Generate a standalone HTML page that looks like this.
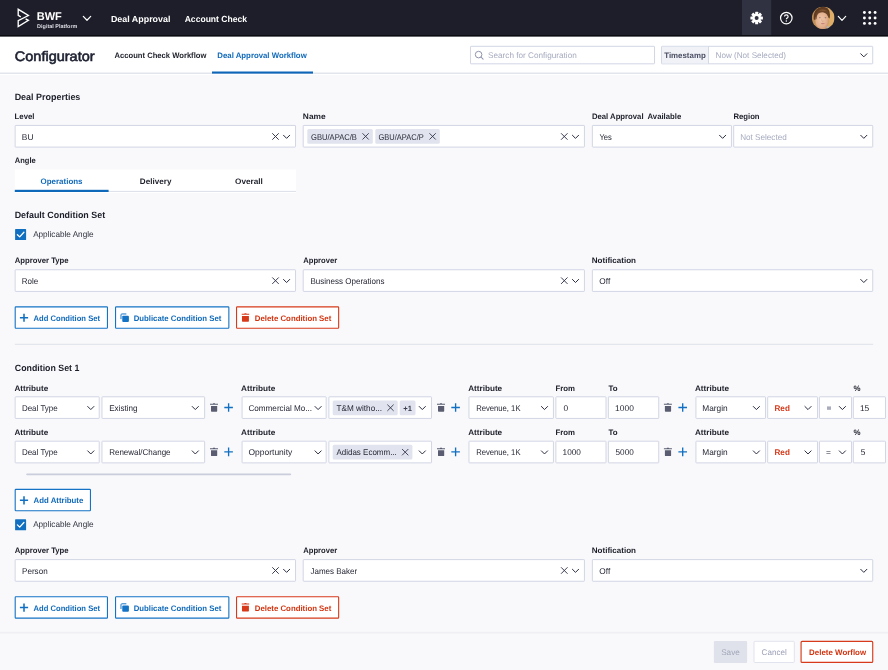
<!DOCTYPE html>
<html lang="en"><head><meta charset="utf-8"><title>Configurator</title>
<style>
*{margin:0;padding:0;box-sizing:border-box}
html,body{width:888px;height:670px;overflow:hidden;background:#f9f9fb;font-family:"Liberation Sans", sans-serif;}
#app{position:relative;width:888px;height:670px;overflow:hidden;background:#f9f9fb;filter:opacity(1)}
.layer{position:absolute;left:0;top:0;width:888px;height:670px}
.t{position:absolute;white-space:nowrap;line-height:1;display:block;transform-origin:0 0}
</style></head>
<body><div id="app">
<svg class="layer" id="shape-layer" width="888" height="670" viewBox="0 0 888 670"><rect x="0.00" y="36.00" width="888.00" height="39.10" rx="0" fill="#fff"/><rect x="0.00" y="72.60" width="888.00" height="1.20" rx="0" fill="#dcdfe9"/><rect x="0.00" y="0.00" width="888.00" height="36.40" rx="0" fill="#1d1e29"/><rect x="0.00" y="35.00" width="888.00" height="1.40" rx="0" fill="#0b0b12"/><rect x="742.00" y="0.00" width="29.20" height="35.00" rx="0" fill="#303241"/><rect x="212.00" y="71.50" width="101.00" height="2.10" rx="0" fill="#0e66b8"/><rect x="470.48" y="46.32" width="184.05" height="17.50" rx="0.5" fill="#fff" stroke="#d0d4e4" stroke-width="0.95"/><rect x="661.48" y="46.32" width="211.25" height="17.50" rx="0.5" fill="#fff" stroke="#d0d4e4" stroke-width="0.95"/><rect x="661.90" y="46.80" width="46.30" height="16.60" rx="0" fill="#f1f2f7"/><rect x="708.00" y="46.40" width="0.95" height="17.40" rx="0" fill="#d3d6e5"/><rect x="15.17" y="125.45" width="280.35" height="21.65" rx="0.5" fill="#fff" stroke="#d0d4e4" stroke-width="0.95"/><rect x="303.23" y="125.45" width="281.20" height="21.65" rx="0.5" fill="#fff" stroke="#d0d4e4" stroke-width="0.95"/><rect x="307.30" y="129.05" width="65.50" height="14.80" rx="1.5" fill="#e1e4ee"/><rect x="375.30" y="129.05" width="64.50" height="14.80" rx="1.5" fill="#e1e4ee"/><rect x="592.38" y="125.45" width="139.05" height="21.65" rx="0.5" fill="#fff" stroke="#d0d4e4" stroke-width="0.95"/><rect x="733.68" y="125.45" width="139.05" height="21.65" rx="0.5" fill="#fff" stroke="#d0d4e4" stroke-width="0.95"/><rect x="14.80" y="169.50" width="281.20" height="23.50" rx="0" fill="#fff"/><rect x="14.80" y="190.90" width="281.20" height="0.90" rx="0" fill="#d8dbe6"/><rect x="14.80" y="189.80" width="93.80" height="2.20" rx="0" fill="#0f69bb"/><rect x="15.17" y="269.76" width="280.35" height="21.65" rx="0.5" fill="#fff" stroke="#d0d4e4" stroke-width="0.95"/><rect x="303.23" y="269.76" width="281.20" height="21.65" rx="0.5" fill="#fff" stroke="#d0d4e4" stroke-width="0.95"/><rect x="592.38" y="269.76" width="280.35" height="21.65" rx="0.5" fill="#fff" stroke="#d0d4e4" stroke-width="0.95"/><rect x="15.20" y="306.88" width="92.25" height="21.40" rx="0.7" fill="#fff" stroke="#1573c6" stroke-width="1.1"/><rect x="115.55" y="306.88" width="113.30" height="21.40" rx="0.7" fill="#fff" stroke="#1573c6" stroke-width="1.1"/><rect x="236.55" y="306.88" width="102.10" height="21.40" rx="0.7" fill="#fff" stroke="#d63a1a" stroke-width="1.1"/><rect x="14.80" y="343.80" width="858.40" height="1.00" rx="0" fill="#dfe1ea"/><rect x="15.17" y="396.80" width="84.05" height="21.65" rx="0.5" fill="#fff" stroke="#d0d4e4" stroke-width="0.95"/><rect x="101.97" y="396.80" width="102.65" height="21.65" rx="0.5" fill="#fff" stroke="#d0d4e4" stroke-width="0.95"/><rect x="242.07" y="396.80" width="84.10" height="21.65" rx="0.5" fill="#fff" stroke="#d0d4e4" stroke-width="0.95"/><rect x="328.88" y="396.80" width="102.65" height="21.65" rx="0.5" fill="#fff" stroke="#d0d4e4" stroke-width="0.95"/><rect x="332.70" y="400.42" width="65.00" height="14.80" rx="1.5" fill="#e1e4ee"/><rect x="399.70" y="400.42" width="15.80" height="14.80" rx="1.5" fill="#e1e4ee"/><rect x="468.98" y="396.80" width="84.45" height="21.65" rx="0.5" fill="#fff" stroke="#d0d4e4" stroke-width="0.95"/><rect x="555.88" y="396.80" width="50.15" height="21.65" rx="0.5" fill="#fff" stroke="#d0d4e4" stroke-width="0.95"/><rect x="608.38" y="396.80" width="50.35" height="21.65" rx="0.5" fill="#fff" stroke="#d0d4e4" stroke-width="0.95"/><rect x="695.93" y="396.80" width="69.60" height="21.65" rx="0.5" fill="#fff" stroke="#d0d4e4" stroke-width="0.95"/><rect x="767.68" y="396.80" width="49.85" height="21.65" rx="0.5" fill="#fff" stroke="#d0d4e4" stroke-width="0.95"/><rect x="819.43" y="396.80" width="32.10" height="21.65" rx="0.5" fill="#fff" stroke="#d0d4e4" stroke-width="0.95"/><rect x="827.00" y="406.42" width="4.00" height="3.40" rx="0" fill="#a9acbc"/><rect x="853.33" y="396.80" width="32.20" height="21.65" rx="0.5" fill="#fff" stroke="#d0d4e4" stroke-width="0.95"/><rect x="15.17" y="441.20" width="84.05" height="21.65" rx="0.5" fill="#fff" stroke="#d0d4e4" stroke-width="0.95"/><rect x="101.97" y="441.20" width="102.65" height="21.65" rx="0.5" fill="#fff" stroke="#d0d4e4" stroke-width="0.95"/><rect x="242.07" y="441.20" width="84.10" height="21.65" rx="0.5" fill="#fff" stroke="#d0d4e4" stroke-width="0.95"/><rect x="328.88" y="441.20" width="102.65" height="21.65" rx="0.5" fill="#fff" stroke="#d0d4e4" stroke-width="0.95"/><rect x="332.70" y="444.82" width="79.70" height="14.80" rx="1.5" fill="#e1e4ee"/><rect x="468.98" y="441.20" width="84.45" height="21.65" rx="0.5" fill="#fff" stroke="#d0d4e4" stroke-width="0.95"/><rect x="555.88" y="441.20" width="50.15" height="21.65" rx="0.5" fill="#fff" stroke="#d0d4e4" stroke-width="0.95"/><rect x="608.38" y="441.20" width="50.35" height="21.65" rx="0.5" fill="#fff" stroke="#d0d4e4" stroke-width="0.95"/><rect x="695.93" y="441.20" width="69.60" height="21.65" rx="0.5" fill="#fff" stroke="#d0d4e4" stroke-width="0.95"/><rect x="767.68" y="441.20" width="49.85" height="21.65" rx="0.5" fill="#fff" stroke="#d0d4e4" stroke-width="0.95"/><rect x="819.43" y="441.20" width="32.10" height="21.65" rx="0.5" fill="#fff" stroke="#d0d4e4" stroke-width="0.95"/><rect x="853.33" y="441.20" width="32.20" height="21.65" rx="0.5" fill="#fff" stroke="#d0d4e4" stroke-width="0.95"/><rect x="26.20" y="473.40" width="265.00" height="1.90" rx="1" fill="#c9cddc"/><rect x="15.20" y="489.42" width="75.25" height="21.40" rx="0.7" fill="#fff" stroke="#1573c6" stroke-width="1.1"/><rect x="15.17" y="559.60" width="280.35" height="21.65" rx="0.5" fill="#fff" stroke="#d0d4e4" stroke-width="0.95"/><rect x="303.23" y="559.60" width="281.20" height="21.65" rx="0.5" fill="#fff" stroke="#d0d4e4" stroke-width="0.95"/><rect x="592.38" y="559.60" width="280.35" height="21.65" rx="0.5" fill="#fff" stroke="#d0d4e4" stroke-width="0.95"/><rect x="15.20" y="596.72" width="92.25" height="21.40" rx="0.7" fill="#fff" stroke="#1573c6" stroke-width="1.1"/><rect x="115.55" y="596.72" width="113.30" height="21.40" rx="0.7" fill="#fff" stroke="#1573c6" stroke-width="1.1"/><rect x="236.55" y="596.72" width="102.10" height="21.40" rx="0.7" fill="#fff" stroke="#d63a1a" stroke-width="1.1"/><rect x="0.00" y="631.70" width="888.00" height="1.90" rx="0" fill="#f0f0f4"/><rect x="713.90" y="640.90" width="33.20" height="22.00" rx="1.0" fill="#dfe2ea"/><rect x="754.00" y="641.30" width="40.30" height="21.20" rx="1.0" fill="#fff" stroke="#e1e3ed" stroke-width="1.0"/><rect x="801.08" y="641.38" width="71.65" height="21.05" rx="1.0" fill="#fff" stroke="#d63a1a" stroke-width="1.15"/></svg>
<svg class="layer" id="icon-layer" width="888" height="670" viewBox="0 0 888 670"><svg x="14" y="6" width="20" height="24" viewBox="14 6 20 24" overflow="visible"><path d="M20.8,16.9 L18.2,15.4 L18.2,9.3 L28.4,15.5 L18.2,20.6 L18.2,26.5 L28.4,20.4 L25.6,18.9" fill="none" stroke="#fff" stroke-width="1.35" stroke-linejoin="miter"/></svg><svg x="82.30" y="15.35" width="9.40" height="5.90" viewBox="-1 -1 9.40 5.90" overflow="visible"><polyline points="0,0 3.70,3.90 7.40,0" fill="none" stroke="#fff" stroke-width="1.2" stroke-linecap="round" stroke-linejoin="round"/></svg><svg x="749.65" y="11.05" width="14" height="14" viewBox="-7 -7 14 14" overflow="visible"><g fill="#fff"><rect x="-1.5" y="-6.25" width="3.0" height="3.6" rx="0.4" transform="rotate(0)"/><rect x="-1.5" y="-6.25" width="3.0" height="3.6" rx="0.4" transform="rotate(45)"/><rect x="-1.5" y="-6.25" width="3.0" height="3.6" rx="0.4" transform="rotate(90)"/><rect x="-1.5" y="-6.25" width="3.0" height="3.6" rx="0.4" transform="rotate(135)"/><rect x="-1.5" y="-6.25" width="3.0" height="3.6" rx="0.4" transform="rotate(180)"/><rect x="-1.5" y="-6.25" width="3.0" height="3.6" rx="0.4" transform="rotate(225)"/><rect x="-1.5" y="-6.25" width="3.0" height="3.6" rx="0.4" transform="rotate(270)"/><rect x="-1.5" y="-6.25" width="3.0" height="3.6" rx="0.4" transform="rotate(315)"/></g><circle r="4.3" fill="#fff"/><circle r="2.0" fill="#303241"/></svg><svg x="779.3" y="11.1" width="14" height="14" viewBox="-7 -7 14 14" overflow="visible"><circle r="5.75" fill="none" stroke="#fff" stroke-width="1.2"/><path d="M-1.8,-1.5 Q-1.8,-3.2 0,-3.2 Q1.8,-3.2 1.8,-1.7 Q1.8,-0.7 0.9,-0.1 Q0,0.5 0,1.2" fill="none" stroke="#fff" stroke-width="1.15"/><circle cy="2.8" r="0.75" fill="#fff"/></svg><svg x="811.8" y="6.6" width="22.8" height="22.6" viewBox="0 0 228 226" overflow="visible"><defs><clipPath id="av"><ellipse cx="114" cy="113" rx="113" ry="112"/></clipPath><radialGradient id="fc" cx="0.45" cy="0.45" r="0.6"><stop offset="0" stop-color="#f0c7ab"/><stop offset="0.7" stop-color="#e2ae8c"/><stop offset="1" stop-color="#c98f6c"/></radialGradient><linearGradient id="bgx" x1="0" x2="1" y1="0" y2="0"><stop offset="0" stop-color="#b98a55"/><stop offset="0.55" stop-color="#d9a762"/><stop offset="1" stop-color="#e0b06a"/></linearGradient></defs><g clip-path="url(#av)"><rect width="228" height="226" fill="url(#bgx)"/><path d="M20,130 Q10,40 70,12 Q120,-10 160,18 Q190,45 178,120 L160,110 Q150,70 110,62 Q70,60 55,95 L48,140 Z" fill="#5e3b22"/><ellipse cx="103" cy="138" rx="68" ry="92" fill="url(#fc)"/><path d="M38,120 Q30,50 80,28 Q125,12 158,40 Q176,70 170,112 Q160,72 118,58 Q84,52 62,72 Q48,90 46,128 Z" fill="#6b4326"/><path d="M70,40 Q110,20 150,44 Q120,36 70,40 Z" fill="#8d5e38"/><ellipse cx="80" cy="112" rx="10" ry="4.5" fill="#7d6a66"/><ellipse cx="137" cy="112" rx="10" ry="4.5" fill="#7d6a66"/><path d="M100,120 Q96,146 108,150 Q118,148 114,140" fill="none" stroke="#cf9a7c" stroke-width="5"/><ellipse cx="110" cy="170" rx="20" ry="5.5" fill="#c5807a"/><rect x="150" y="196" width="20" height="30" fill="#aab6c8"/></g></svg><svg x="837.30" y="15.45" width="9.40" height="5.90" viewBox="-1 -1 9.40 5.90" overflow="visible"><polyline points="0,0 3.70,3.90 7.40,0" fill="none" stroke="#fff" stroke-width="1.2" stroke-linecap="round" stroke-linejoin="round"/></svg><svg x="860" y="8" width="20" height="20" viewBox="860 8 20 20" overflow="visible"><circle cx="864.40" cy="12.50" r="1.45" fill="#fff"/><circle cx="864.40" cy="17.95" r="1.45" fill="#fff"/><circle cx="864.40" cy="23.40" r="1.45" fill="#fff"/><circle cx="869.75" cy="12.50" r="1.45" fill="#fff"/><circle cx="869.75" cy="17.95" r="1.45" fill="#fff"/><circle cx="869.75" cy="23.40" r="1.45" fill="#fff"/><circle cx="875.10" cy="12.50" r="1.45" fill="#fff"/><circle cx="875.10" cy="17.95" r="1.45" fill="#fff"/><circle cx="875.10" cy="23.40" r="1.45" fill="#fff"/></svg><svg x="474" y="50" width="11" height="11" viewBox="0 0 11 11" overflow="visible"><circle cx="4.6" cy="4.6" r="3.3" fill="none" stroke="#8f94ad" stroke-width="1"/><path d="M7,7 L9.1,9.1" stroke="#8f94ad" stroke-width="1.05" stroke-linecap="round"/></svg><svg x="859.70" y="52.75" width="8.20" height="5.10" viewBox="-1 -1 8.20 5.10" overflow="visible"><polyline points="0,0 3.10,3.10 6.20,0" fill="none" stroke="#2a2d42" stroke-width="1.0" stroke-linecap="round" stroke-linejoin="round"/></svg><svg x="271.55" y="132.55" width="7.90" height="7.90" viewBox="-1 -1 7.90 7.90" overflow="visible"><path d="M0,0 L5.9,5.9 M5.9,0 L0,5.9" fill="none" stroke="#30334a" stroke-width="0.95" stroke-linecap="round"/></svg><svg x="282.50" y="134.25" width="8.20" height="5.10" viewBox="-1 -1 8.20 5.10" overflow="visible"><polyline points="0,0 3.10,3.10 6.20,0" fill="none" stroke="#2a2d42" stroke-width="1.0" stroke-linecap="round" stroke-linejoin="round"/></svg><svg x="361.75" y="132.55" width="7.70" height="7.70" viewBox="-1 -1 7.70 7.70" overflow="visible"><path d="M0,0 L5.7,5.7 M5.7,0 L0,5.7" fill="none" stroke="#30334a" stroke-width="0.9" stroke-linecap="round"/></svg><svg x="428.75" y="132.55" width="7.70" height="7.70" viewBox="-1 -1 7.70 7.70" overflow="visible"><path d="M0,0 L5.7,5.7 M5.7,0 L0,5.7" fill="none" stroke="#30334a" stroke-width="0.9" stroke-linecap="round"/></svg><svg x="560.35" y="132.55" width="7.90" height="7.90" viewBox="-1 -1 7.90 7.90" overflow="visible"><path d="M0,0 L5.9,5.9 M5.9,0 L0,5.9" fill="none" stroke="#30334a" stroke-width="0.95" stroke-linecap="round"/></svg><svg x="571.40" y="134.25" width="8.20" height="5.10" viewBox="-1 -1 8.20 5.10" overflow="visible"><polyline points="0,0 3.10,3.10 6.20,0" fill="none" stroke="#2a2d42" stroke-width="1.0" stroke-linecap="round" stroke-linejoin="round"/></svg><svg x="718.50" y="134.25" width="8.20" height="5.10" viewBox="-1 -1 8.20 5.10" overflow="visible"><polyline points="0,0 3.10,3.10 6.20,0" fill="none" stroke="#2a2d42" stroke-width="1.0" stroke-linecap="round" stroke-linejoin="round"/></svg><svg x="859.70" y="134.25" width="8.20" height="5.10" viewBox="-1 -1 8.20 5.10" overflow="visible"><polyline points="0,0 3.10,3.10 6.20,0" fill="none" stroke="#2a2d42" stroke-width="1.0" stroke-linecap="round" stroke-linejoin="round"/></svg><svg x="15.10" y="229.10" width="11" height="11" viewBox="0 0 11 11" overflow="visible"><rect width="11" height="11" rx="0.6" fill="#106fc0"/><polyline points="2.3,5.6 4.6,7.8 8.8,3.2" fill="none" stroke="#fff" stroke-width="1.3" stroke-linecap="round" stroke-linejoin="round"/></svg><svg x="271.55" y="276.73" width="7.90" height="7.90" viewBox="-1 -1 7.90 7.90" overflow="visible"><path d="M0,0 L5.9,5.9 M5.9,0 L0,5.9" fill="none" stroke="#30334a" stroke-width="0.95" stroke-linecap="round"/></svg><svg x="282.50" y="278.43" width="8.20" height="5.10" viewBox="-1 -1 8.20 5.10" overflow="visible"><polyline points="0,0 3.10,3.10 6.20,0" fill="none" stroke="#2a2d42" stroke-width="1.0" stroke-linecap="round" stroke-linejoin="round"/></svg><svg x="560.35" y="276.73" width="7.90" height="7.90" viewBox="-1 -1 7.90 7.90" overflow="visible"><path d="M0,0 L5.9,5.9 M5.9,0 L0,5.9" fill="none" stroke="#30334a" stroke-width="0.95" stroke-linecap="round"/></svg><svg x="571.40" y="278.43" width="8.20" height="5.10" viewBox="-1 -1 8.20 5.10" overflow="visible"><polyline points="0,0 3.10,3.10 6.20,0" fill="none" stroke="#2a2d42" stroke-width="1.0" stroke-linecap="round" stroke-linejoin="round"/></svg><svg x="859.70" y="278.43" width="8.20" height="5.10" viewBox="-1 -1 8.20 5.10" overflow="visible"><polyline points="0,0 3.10,3.10 6.20,0" fill="none" stroke="#2a2d42" stroke-width="1.0" stroke-linecap="round" stroke-linejoin="round"/></svg><svg x="18.90" y="312.63" width="10.20" height="10.20" viewBox="-1 -1 10.20 10.20" overflow="visible"><path d="M4.1,0 V8.2 M0,4.1 H8.2" fill="none" stroke="#1270c2" stroke-width="1.55" stroke-linecap="butt"/></svg><svg x="120.50" y="313.48" width="8.40" height="8.40" viewBox="0 0 86 86" overflow="visible"><path fill="#1573c6" d="M28,22 H76 Q86,22 86,32 V76 Q86,86 76,86 H28 Q18,86 18,76 V32 Q18,22 28,22 Z"/><path fill="none" stroke="#1573c6" stroke-width="10" d="M5,58 V14 Q5,5 14,5 H60"/></svg><svg x="241.70" y="313.28" width="7.50" height="8.40" viewBox="0 0 80 84" preserveAspectRatio="none" overflow="visible"><path fill="#d63a1a" d="M30,0 H50 V6 H30 Z M0,5 H80 V15 H0 Z M3,26 H77 V77 Q77,84 70,84 H10 Q3,84 3,77 Z"/></svg><svg x="86.70" y="405.47" width="8.20" height="5.10" viewBox="-1 -1 8.20 5.10" overflow="visible"><polyline points="0,0 3.10,3.10 6.20,0" fill="none" stroke="#2a2d42" stroke-width="1.0" stroke-linecap="round" stroke-linejoin="round"/></svg><svg x="191.20" y="405.47" width="8.20" height="5.10" viewBox="-1 -1 8.20 5.10" overflow="visible"><polyline points="0,0 3.10,3.10 6.20,0" fill="none" stroke="#2a2d42" stroke-width="1.0" stroke-linecap="round" stroke-linejoin="round"/></svg><svg x="210.00" y="403.32" width="8.00" height="8.40" viewBox="0 0 80 84" preserveAspectRatio="none" overflow="visible"><path fill="#5a5d71" d="M30,0 H50 V6 H30 Z M0,5 H80 V15 H0 Z M10,26 H72 V77 Q72,84 65,84 H17 Q10,84 10,77 Z"/></svg><svg x="223.30" y="402.22" width="10.60" height="10.60" viewBox="-1 -1 10.60 10.60" overflow="visible"><path d="M4.3,0 V8.6 M0,4.3 H8.6" fill="none" stroke="#1270c2" stroke-width="1.35" stroke-linecap="butt"/></svg><svg x="314.00" y="405.47" width="8.20" height="5.10" viewBox="-1 -1 8.20 5.10" overflow="visible"><polyline points="0,0 3.10,3.10 6.20,0" fill="none" stroke="#2a2d42" stroke-width="1.0" stroke-linecap="round" stroke-linejoin="round"/></svg><svg x="386.65" y="403.92" width="7.70" height="7.70" viewBox="-1 -1 7.70 7.70" overflow="visible"><path d="M0,0 L5.7,5.7 M5.7,0 L0,5.7" fill="none" stroke="#30334a" stroke-width="0.9" stroke-linecap="round"/></svg><svg x="418.20" y="405.47" width="8.20" height="5.10" viewBox="-1 -1 8.20 5.10" overflow="visible"><polyline points="0,0 3.10,3.10 6.20,0" fill="none" stroke="#2a2d42" stroke-width="1.0" stroke-linecap="round" stroke-linejoin="round"/></svg><svg x="437.00" y="403.32" width="8.00" height="8.40" viewBox="0 0 80 84" preserveAspectRatio="none" overflow="visible"><path fill="#5a5d71" d="M30,0 H50 V6 H30 Z M0,5 H80 V15 H0 Z M10,26 H72 V77 Q72,84 65,84 H17 Q10,84 10,77 Z"/></svg><svg x="450.30" y="402.22" width="10.60" height="10.60" viewBox="-1 -1 10.60 10.60" overflow="visible"><path d="M4.3,0 V8.6 M0,4.3 H8.6" fill="none" stroke="#1270c2" stroke-width="1.35" stroke-linecap="butt"/></svg><svg x="540.40" y="405.47" width="8.20" height="5.10" viewBox="-1 -1 8.20 5.10" overflow="visible"><polyline points="0,0 3.10,3.10 6.20,0" fill="none" stroke="#2a2d42" stroke-width="1.0" stroke-linecap="round" stroke-linejoin="round"/></svg><svg x="663.90" y="403.32" width="8.00" height="8.40" viewBox="0 0 80 84" preserveAspectRatio="none" overflow="visible"><path fill="#5a5d71" d="M30,0 H50 V6 H30 Z M0,5 H80 V15 H0 Z M10,26 H72 V77 Q72,84 65,84 H17 Q10,84 10,77 Z"/></svg><svg x="677.40" y="402.22" width="10.60" height="10.60" viewBox="-1 -1 10.60 10.60" overflow="visible"><path d="M4.3,0 V8.6 M0,4.3 H8.6" fill="none" stroke="#1270c2" stroke-width="1.35" stroke-linecap="butt"/></svg><svg x="752.30" y="405.47" width="8.20" height="5.10" viewBox="-1 -1 8.20 5.10" overflow="visible"><polyline points="0,0 3.10,3.10 6.20,0" fill="none" stroke="#2a2d42" stroke-width="1.0" stroke-linecap="round" stroke-linejoin="round"/></svg><svg x="803.90" y="405.47" width="8.20" height="5.10" viewBox="-1 -1 8.20 5.10" overflow="visible"><polyline points="0,0 3.10,3.10 6.20,0" fill="none" stroke="#2a2d42" stroke-width="1.0" stroke-linecap="round" stroke-linejoin="round"/></svg><svg x="838.30" y="405.47" width="8.20" height="5.10" viewBox="-1 -1 8.20 5.10" overflow="visible"><polyline points="0,0 3.10,3.10 6.20,0" fill="none" stroke="#2a2d42" stroke-width="1.0" stroke-linecap="round" stroke-linejoin="round"/></svg><svg x="86.70" y="449.87" width="8.20" height="5.10" viewBox="-1 -1 8.20 5.10" overflow="visible"><polyline points="0,0 3.10,3.10 6.20,0" fill="none" stroke="#2a2d42" stroke-width="1.0" stroke-linecap="round" stroke-linejoin="round"/></svg><svg x="191.20" y="449.87" width="8.20" height="5.10" viewBox="-1 -1 8.20 5.10" overflow="visible"><polyline points="0,0 3.10,3.10 6.20,0" fill="none" stroke="#2a2d42" stroke-width="1.0" stroke-linecap="round" stroke-linejoin="round"/></svg><svg x="210.00" y="447.72" width="8.00" height="8.40" viewBox="0 0 80 84" preserveAspectRatio="none" overflow="visible"><path fill="#5a5d71" d="M30,0 H50 V6 H30 Z M0,5 H80 V15 H0 Z M10,26 H72 V77 Q72,84 65,84 H17 Q10,84 10,77 Z"/></svg><svg x="223.30" y="446.62" width="10.60" height="10.60" viewBox="-1 -1 10.60 10.60" overflow="visible"><path d="M4.3,0 V8.6 M0,4.3 H8.6" fill="none" stroke="#1270c2" stroke-width="1.35" stroke-linecap="butt"/></svg><svg x="314.00" y="449.87" width="8.20" height="5.10" viewBox="-1 -1 8.20 5.10" overflow="visible"><polyline points="0,0 3.10,3.10 6.20,0" fill="none" stroke="#2a2d42" stroke-width="1.0" stroke-linecap="round" stroke-linejoin="round"/></svg><svg x="401.35" y="448.32" width="7.70" height="7.70" viewBox="-1 -1 7.70 7.70" overflow="visible"><path d="M0,0 L5.7,5.7 M5.7,0 L0,5.7" fill="none" stroke="#30334a" stroke-width="0.9" stroke-linecap="round"/></svg><svg x="418.20" y="449.87" width="8.20" height="5.10" viewBox="-1 -1 8.20 5.10" overflow="visible"><polyline points="0,0 3.10,3.10 6.20,0" fill="none" stroke="#2a2d42" stroke-width="1.0" stroke-linecap="round" stroke-linejoin="round"/></svg><svg x="437.00" y="447.72" width="8.00" height="8.40" viewBox="0 0 80 84" preserveAspectRatio="none" overflow="visible"><path fill="#5a5d71" d="M30,0 H50 V6 H30 Z M0,5 H80 V15 H0 Z M10,26 H72 V77 Q72,84 65,84 H17 Q10,84 10,77 Z"/></svg><svg x="450.30" y="446.62" width="10.60" height="10.60" viewBox="-1 -1 10.60 10.60" overflow="visible"><path d="M4.3,0 V8.6 M0,4.3 H8.6" fill="none" stroke="#1270c2" stroke-width="1.35" stroke-linecap="butt"/></svg><svg x="540.40" y="449.87" width="8.20" height="5.10" viewBox="-1 -1 8.20 5.10" overflow="visible"><polyline points="0,0 3.10,3.10 6.20,0" fill="none" stroke="#2a2d42" stroke-width="1.0" stroke-linecap="round" stroke-linejoin="round"/></svg><svg x="663.90" y="447.72" width="8.00" height="8.40" viewBox="0 0 80 84" preserveAspectRatio="none" overflow="visible"><path fill="#5a5d71" d="M30,0 H50 V6 H30 Z M0,5 H80 V15 H0 Z M10,26 H72 V77 Q72,84 65,84 H17 Q10,84 10,77 Z"/></svg><svg x="677.40" y="446.62" width="10.60" height="10.60" viewBox="-1 -1 10.60 10.60" overflow="visible"><path d="M4.3,0 V8.6 M0,4.3 H8.6" fill="none" stroke="#1270c2" stroke-width="1.35" stroke-linecap="butt"/></svg><svg x="752.30" y="449.87" width="8.20" height="5.10" viewBox="-1 -1 8.20 5.10" overflow="visible"><polyline points="0,0 3.10,3.10 6.20,0" fill="none" stroke="#2a2d42" stroke-width="1.0" stroke-linecap="round" stroke-linejoin="round"/></svg><svg x="803.90" y="449.87" width="8.20" height="5.10" viewBox="-1 -1 8.20 5.10" overflow="visible"><polyline points="0,0 3.10,3.10 6.20,0" fill="none" stroke="#2a2d42" stroke-width="1.0" stroke-linecap="round" stroke-linejoin="round"/></svg><svg x="838.30" y="449.87" width="8.20" height="5.10" viewBox="-1 -1 8.20 5.10" overflow="visible"><polyline points="0,0 3.10,3.10 6.20,0" fill="none" stroke="#2a2d42" stroke-width="1.0" stroke-linecap="round" stroke-linejoin="round"/></svg><svg x="18.90" y="495.20" width="10.20" height="10.20" viewBox="-1 -1 10.20 10.20" overflow="visible"><path d="M4.1,0 V8.2 M0,4.1 H8.2" fill="none" stroke="#1270c2" stroke-width="1.55" stroke-linecap="butt"/></svg><svg x="15.10" y="519.30" width="11" height="11" viewBox="0 0 11 11" overflow="visible"><rect width="11" height="11" rx="0.6" fill="#106fc0"/><polyline points="2.3,5.6 4.6,7.8 8.8,3.2" fill="none" stroke="#fff" stroke-width="1.3" stroke-linecap="round" stroke-linejoin="round"/></svg><svg x="271.55" y="566.57" width="7.90" height="7.90" viewBox="-1 -1 7.90 7.90" overflow="visible"><path d="M0,0 L5.9,5.9 M5.9,0 L0,5.9" fill="none" stroke="#30334a" stroke-width="0.95" stroke-linecap="round"/></svg><svg x="282.50" y="568.27" width="8.20" height="5.10" viewBox="-1 -1 8.20 5.10" overflow="visible"><polyline points="0,0 3.10,3.10 6.20,0" fill="none" stroke="#2a2d42" stroke-width="1.0" stroke-linecap="round" stroke-linejoin="round"/></svg><svg x="560.35" y="566.57" width="7.90" height="7.90" viewBox="-1 -1 7.90 7.90" overflow="visible"><path d="M0,0 L5.9,5.9 M5.9,0 L0,5.9" fill="none" stroke="#30334a" stroke-width="0.95" stroke-linecap="round"/></svg><svg x="571.40" y="568.27" width="8.20" height="5.10" viewBox="-1 -1 8.20 5.10" overflow="visible"><polyline points="0,0 3.10,3.10 6.20,0" fill="none" stroke="#2a2d42" stroke-width="1.0" stroke-linecap="round" stroke-linejoin="round"/></svg><svg x="859.70" y="568.27" width="8.20" height="5.10" viewBox="-1 -1 8.20 5.10" overflow="visible"><polyline points="0,0 3.10,3.10 6.20,0" fill="none" stroke="#2a2d42" stroke-width="1.0" stroke-linecap="round" stroke-linejoin="round"/></svg><svg x="18.90" y="602.47" width="10.20" height="10.20" viewBox="-1 -1 10.20 10.20" overflow="visible"><path d="M4.1,0 V8.2 M0,4.1 H8.2" fill="none" stroke="#1270c2" stroke-width="1.55" stroke-linecap="butt"/></svg><svg x="120.50" y="603.32" width="8.40" height="8.40" viewBox="0 0 86 86" overflow="visible"><path fill="#1573c6" d="M28,22 H76 Q86,22 86,32 V76 Q86,86 76,86 H28 Q18,86 18,76 V32 Q18,22 28,22 Z"/><path fill="none" stroke="#1573c6" stroke-width="10" d="M5,58 V14 Q5,5 14,5 H60"/></svg><svg x="241.70" y="603.12" width="7.50" height="8.40" viewBox="0 0 80 84" preserveAspectRatio="none" overflow="visible"><path fill="#d63a1a" d="M30,0 H50 V6 H30 Z M0,5 H80 V15 H0 Z M3,26 H77 V77 Q77,84 70,84 H10 Q3,84 3,77 Z"/></svg></svg>
<nav class="layer" id="nav-layer"><span class="t" id="t0" style="left:36px;top:9px;font-size:11.25px;font-weight:700;color:#fff;transform:translate(0.72px,1.60px) scaleX(0.9810) skewX(0.05deg);">BWF</span><span class="t" id="t1" style="left:37px;top:22px;font-size:5.4px;font-weight:700;color:#dcdde4;transform:translate(0.12px,1.80px) scaleX(1.0118) skewX(0.05deg);">Digital Platform</span><span class="t" id="t2" style="left:110px;top:13px;font-size:8.8px;font-weight:700;color:#fff;transform:translate(0.87px,1.75px) scaleX(1.0119) skewX(0.05deg);">Deal Approval</span><span class="t" id="t3" style="left:184px;top:13px;font-size:8.8px;font-weight:700;color:#fff;transform:translate(0.68px,1.75px) scaleX(0.9738) skewX(0.05deg);">Account Check</span></nav>
<header class="layer" id="header-layer"><span class="t" id="t4" style="left:14px;top:48px;font-size:13.9px;font-weight:400;color:#1d2030;transform:translate(0.84px,1.50px) scaleX(1.0423) skewX(0.05deg);-webkit-text-stroke:0.6px;">Configurator</span><span class="t" id="t5" style="left:114px;top:51px;font-size:7.9px;font-weight:700;color:#1c1e29;transform:translate(0.50px,1.05px) scaleX(0.9672) skewX(0.05deg);">Account Check Workflow</span><span class="t" id="t6" style="left:217px;top:51px;font-size:7.9px;font-weight:700;color:#0f69ba;transform:translate(0.32px,1.05px) scaleX(0.9896) skewX(0.05deg);">Deal Approval Workflow</span><span class="t" id="t7" style="left:488px;top:51px;font-size:8.2px;font-weight:400;color:#a6aabf;transform:translate(0.00px,1.10px) scaleX(0.9999) skewX(0.05deg);">Search for Configuration</span><span class="t" id="t8" style="left:664px;top:51px;font-size:7.9px;font-weight:700;color:#4b4f64;transform:translate(0.21px,1.10px) scaleX(0.9994) skewX(0.05deg);">Timestamp</span><span class="t" id="t9" style="left:715px;top:51px;font-size:8.2px;font-weight:400;color:#a6aabf;transform:translate(0.51px,1.10px) scaleX(0.9922) skewX(0.05deg);">Now (Not Selected)</span></header>
<main class="layer" id="body-layer"><span class="t" id="t10" style="left:14px;top:91px;font-size:9.1px;font-weight:700;color:#1c1e29;transform:translate(0.63px,1.60px) scaleX(0.9848) skewX(0.05deg);">Deal Properties</span><span class="t" id="t11" style="left:14px;top:112px;font-size:7.9px;font-weight:700;color:#1c1e29;transform:translate(0.61px,1.10px) scaleX(0.9860) skewX(0.05deg);">Level</span><span class="t" id="t12" style="left:21px;top:131px;font-size:8.4px;font-weight:400;color:#262836;transform:translate(0.82px,1.80px) scaleX(1.0000) skewX(0.05deg);">BU</span><span class="t" id="t13" style="left:302px;top:112px;font-size:7.9px;font-weight:700;color:#1c1e29;transform:translate(0.85px,1.10px) scaleX(1.0582) skewX(0.05deg);">Name</span><span class="t" id="t14" style="left:311px;top:131px;font-size:8.4px;font-weight:400;color:#262836;transform:translate(0.02px,1.80px) scaleX(0.9079) skewX(0.05deg);">GBU/APAC/B</span><span class="t" id="t15" style="left:378px;top:131px;font-size:8.4px;font-weight:400;color:#262836;transform:translate(0.52px,1.80px) scaleX(0.8932) skewX(0.05deg);">GBU/APAC/P</span><span class="t" id="t16" style="left:591px;top:112px;font-size:7.9px;font-weight:700;color:#1c1e29;transform:translate(0.89px,1.10px) scaleX(0.9790) skewX(0.05deg);">Deal Approval&nbsp; Available</span><span class="t" id="t17" style="left:599px;top:131px;font-size:8.4px;font-weight:400;color:#262836;transform:translate(0.37px,1.80px) scaleX(0.9059) skewX(0.05deg);">Yes</span><span class="t" id="t18" style="left:733px;top:112px;font-size:7.9px;font-weight:700;color:#1c1e29;transform:translate(0.38px,1.10px) scaleX(0.9801) skewX(0.05deg);">Region</span><span class="t" id="t19" style="left:740px;top:131px;font-size:8.4px;font-weight:400;color:#a6aabf;transform:translate(0.12px,1.80px) scaleX(0.9726) skewX(0.05deg);">Not Selected</span><span class="t" id="t20" style="left:14px;top:156px;font-size:7.9px;font-weight:700;color:#1c1e29;transform:translate(0.81px,1.10px) scaleX(0.9537) skewX(0.05deg);">Angle</span><span class="t" id="t21" style="left:40px;top:176px;font-size:8px;font-weight:700;color:#0f69ba;transform:translate(0.54px,1.80px) scaleX(0.9943) skewX(0.05deg);">Operations</span><span class="t" id="t22" style="left:139px;top:176px;font-size:8px;font-weight:700;color:#1c1e29;transform:translate(0.82px,1.80px) scaleX(1.0145) skewX(0.05deg);">Delivery</span><span class="t" id="t23" style="left:235px;top:176px;font-size:8px;font-weight:700;color:#1c1e29;transform:translate(0.05px,1.80px) scaleX(1.0261) skewX(0.05deg);">Overall</span><span class="t" id="t24" style="left:14px;top:209px;font-size:9.1px;font-weight:700;color:#1c1e29;transform:translate(0.63px,1.80px) scaleX(0.9787) skewX(0.05deg);">Default Condition Set</span><span class="t" id="t25" style="left:33px;top:229px;font-size:8.4px;font-weight:400;color:#30333f;transform:translate(0.12px,1.40px) scaleX(0.9758) skewX(0.05deg);">Applicable Angle</span><span class="t" id="t26" style="left:14px;top:256px;font-size:7.9px;font-weight:700;color:#1c1e29;transform:translate(0.73px,1.10px) scaleX(0.9767) skewX(0.05deg);">Approver Type</span><span class="t" id="t27" style="left:21px;top:275px;font-size:8.4px;font-weight:400;color:#262836;transform:translate(0.83px,1.90px) scaleX(0.9537) skewX(0.05deg);">Role</span><span class="t" id="t28" style="left:303px;top:256px;font-size:7.9px;font-weight:700;color:#1c1e29;transform:translate(0.22px,1.10px) scaleX(0.9658) skewX(0.05deg);">Approver</span><span class="t" id="t29" style="left:310px;top:275px;font-size:8.4px;font-weight:400;color:#262836;transform:translate(0.42px,1.90px) scaleX(0.9583) skewX(0.05deg);">Business Operations</span><span class="t" id="t30" style="left:591px;top:256px;font-size:7.9px;font-weight:700;color:#1c1e29;transform:translate(0.74px,1.10px) scaleX(1.0200) skewX(0.05deg);">Notification</span><span class="t" id="t31" style="left:599px;top:275px;font-size:8.4px;font-weight:400;color:#262836;transform:translate(0.34px,1.90px) scaleX(0.9913) skewX(0.05deg);">Off</span><span class="t" id="t32" style="left:33px;top:313px;font-size:8px;font-weight:700;color:#0f69ba;transform:translate(0.59px,1.80px) scaleX(0.9516) skewX(0.05deg);">Add Condition Set</span><span class="t" id="t33" style="left:133px;top:313px;font-size:8px;font-weight:700;color:#0f69ba;transform:translate(0.69px,1.80px) scaleX(0.9711) skewX(0.05deg);">Dublicate Condition Set</span><span class="t" id="t34" style="left:254px;top:313px;font-size:8px;font-weight:700;color:#d2330f;transform:translate(0.83px,1.80px) scaleX(0.9772) skewX(0.05deg);">Delete Condition Set</span><span class="t" id="t35" style="left:14px;top:362px;font-size:9.1px;font-weight:700;color:#1c1e29;transform:translate(0.77px,1.90px) scaleX(0.9685) skewX(0.05deg);">Condition Set 1</span><span class="t" id="t36" style="left:14px;top:383px;font-size:7.9px;font-weight:700;color:#1c1e29;transform:translate(0.39px,1.65px) scaleX(1.0262) skewX(0.05deg);">Attribute</span><span class="t" id="t37" style="left:21px;top:402px;font-size:8.4px;font-weight:400;color:#262836;transform:translate(0.93px,1.87px) scaleX(0.9517) skewX(0.05deg);">Deal Type</span><span class="t" id="t38" style="left:109px;top:402px;font-size:8.4px;font-weight:400;color:#262836;transform:translate(0.16px,1.87px) scaleX(0.9697) skewX(0.05deg);">Existing</span><span class="t" id="t39" style="left:241px;top:383px;font-size:7.9px;font-weight:700;color:#1c1e29;transform:translate(0.08px,1.65px) scaleX(1.0398) skewX(0.05deg);">Attribute</span><span class="t" id="t40" style="left:248px;top:402px;font-size:8.4px;font-weight:400;color:#262836;transform:translate(0.44px,1.87px) scaleX(0.9703) skewX(0.05deg);">Commercial Mo...</span><span class="t" id="t41" style="left:336px;top:402px;font-size:8.4px;font-weight:400;color:#262836;transform:translate(0.57px,1.87px) scaleX(0.9759) skewX(0.05deg);">T&amp;M witho...</span><span class="t" id="t42" style="left:403px;top:403px;font-size:7.6px;font-weight:700;color:#3a3d50;transform:translate(0.30px,1.87px) scaleX(1.0000) skewX(0.05deg);">+1</span><span class="t" id="t43" style="left:468px;top:383px;font-size:7.9px;font-weight:700;color:#1c1e29;transform:translate(0.15px,1.65px) scaleX(1.0339) skewX(0.05deg);">Attribute</span><span class="t" id="t44" style="left:476px;top:402px;font-size:8.4px;font-weight:400;color:#262836;transform:translate(0.17px,1.87px) scaleX(0.9154) skewX(0.05deg);">Revenue, 1K</span><span class="t" id="t45" style="left:555px;top:383px;font-size:7.9px;font-weight:700;color:#1c1e29;transform:translate(0.50px,1.65px) scaleX(0.9888) skewX(0.05deg);">From</span><span class="t" id="t46" style="left:563px;top:402px;font-size:8.4px;font-weight:400;color:#262836;transform:translate(0.38px,1.87px) scaleX(1.0000) skewX(0.05deg);">0</span><span class="t" id="t47" style="left:608px;top:383px;font-size:7.9px;font-weight:700;color:#1c1e29;transform:translate(0.60px,1.65px) scaleX(1.0000) skewX(0.05deg);">To</span><span class="t" id="t48" style="left:615px;top:402px;font-size:8.4px;font-weight:400;color:#262836;transform:translate(0.11px,1.87px) scaleX(1.0051) skewX(0.05deg);">1000</span><span class="t" id="t49" style="left:694px;top:383px;font-size:7.9px;font-weight:700;color:#1c1e29;transform:translate(0.97px,1.65px) scaleX(1.0343) skewX(0.05deg);">Attribute</span><span class="t" id="t50" style="left:702px;top:402px;font-size:8.4px;font-weight:400;color:#262836;transform:translate(0.24px,1.87px) scaleX(0.9943) skewX(0.05deg);">Margin</span><span class="t" id="t51" style="left:774px;top:402px;font-size:8.4px;font-weight:700;color:#d63a1a;transform:translate(0.47px,1.87px) scaleX(0.9724) skewX(0.05deg);">Red</span><span class="t" id="t52" style="left:853px;top:383px;font-size:7.9px;font-weight:700;color:#1c1e29;transform:translate(0.50px,1.65px) scaleX(1.0000) skewX(0.05deg);">%</span><span class="t" id="t53" style="left:859px;top:402px;font-size:8.4px;font-weight:400;color:#262836;transform:translate(0.95px,1.87px) scaleX(1.0000) skewX(0.05deg);">15</span><span class="t" id="t54" style="left:14px;top:427px;font-size:7.9px;font-weight:700;color:#1c1e29;transform:translate(0.39px,1.80px) scaleX(1.0262) skewX(0.05deg);">Attribute</span><span class="t" id="t55" style="left:21px;top:447px;font-size:8.4px;font-weight:400;color:#262836;transform:translate(0.93px,1.27px) scaleX(0.9517) skewX(0.05deg);">Deal Type</span><span class="t" id="t56" style="left:109px;top:447px;font-size:8.4px;font-weight:400;color:#262836;transform:translate(0.17px,1.27px) scaleX(0.9554) skewX(0.05deg);">Renewal/Change</span><span class="t" id="t57" style="left:241px;top:427px;font-size:7.9px;font-weight:700;color:#1c1e29;transform:translate(0.08px,1.80px) scaleX(1.0398) skewX(0.05deg);">Attribute</span><span class="t" id="t58" style="left:248px;top:447px;font-size:8.4px;font-weight:400;color:#262836;transform:translate(0.46px,1.27px) scaleX(1.0128) skewX(0.05deg);">Opportunity</span><span class="t" id="t59" style="left:336px;top:447px;font-size:8.4px;font-weight:400;color:#262836;transform:translate(0.40px,1.27px) scaleX(0.9542) skewX(0.05deg);">Adidas Ecomm...</span><span class="t" id="t60" style="left:468px;top:427px;font-size:7.9px;font-weight:700;color:#1c1e29;transform:translate(0.15px,1.80px) scaleX(1.0339) skewX(0.05deg);">Attribute</span><span class="t" id="t61" style="left:476px;top:447px;font-size:8.4px;font-weight:400;color:#262836;transform:translate(0.17px,1.27px) scaleX(0.9154) skewX(0.05deg);">Revenue, 1K</span><span class="t" id="t62" style="left:555px;top:427px;font-size:7.9px;font-weight:700;color:#1c1e29;transform:translate(0.50px,1.80px) scaleX(0.9888) skewX(0.05deg);">From</span><span class="t" id="t63" style="left:562px;top:447px;font-size:8.4px;font-weight:400;color:#262836;transform:translate(0.53px,1.27px) scaleX(0.9863) skewX(0.05deg);">1000</span><span class="t" id="t64" style="left:608px;top:427px;font-size:7.9px;font-weight:700;color:#1c1e29;transform:translate(0.60px,1.80px) scaleX(1.0000) skewX(0.05deg);">To</span><span class="t" id="t65" style="left:615px;top:447px;font-size:8.4px;font-weight:400;color:#262836;transform:translate(0.55px,1.27px) scaleX(0.9788) skewX(0.05deg);">5000</span><span class="t" id="t66" style="left:694px;top:427px;font-size:7.9px;font-weight:700;color:#1c1e29;transform:translate(0.97px,1.80px) scaleX(1.0343) skewX(0.05deg);">Attribute</span><span class="t" id="t67" style="left:702px;top:447px;font-size:8.4px;font-weight:400;color:#262836;transform:translate(0.24px,1.27px) scaleX(0.9943) skewX(0.05deg);">Margin</span><span class="t" id="t68" style="left:774px;top:447px;font-size:8.4px;font-weight:700;color:#d63a1a;transform:translate(0.47px,1.27px) scaleX(0.9724) skewX(0.05deg);">Red</span><span class="t" id="t69" style="left:826px;top:447px;font-size:8.4px;font-weight:400;color:#262836;transform:translate(0.07px,1.27px) scaleX(1.0000) skewX(0.05deg);">=</span><span class="t" id="t70" style="left:853px;top:427px;font-size:7.9px;font-weight:700;color:#1c1e29;transform:translate(0.50px,1.80px) scaleX(1.0000) skewX(0.05deg);">%</span><span class="t" id="t71" style="left:860px;top:447px;font-size:8.4px;font-weight:400;color:#262836;transform:translate(0.76px,1.27px) scaleX(1.0000) skewX(0.05deg);">5</span><span class="t" id="t72" style="left:33px;top:496px;font-size:8px;font-weight:700;color:#0f69ba;transform:translate(0.60px,1.35px) scaleX(0.9788) skewX(0.05deg);">Add Attribute</span><span class="t" id="t73" style="left:33px;top:519px;font-size:8.4px;font-weight:400;color:#30333f;transform:translate(0.12px,1.40px) scaleX(0.9758) skewX(0.05deg);">Applicable Angle</span><span class="t" id="t74" style="left:14px;top:546px;font-size:7.9px;font-weight:700;color:#1c1e29;transform:translate(0.73px,1.00px) scaleX(0.9767) skewX(0.05deg);">Approver Type</span><span class="t" id="t75" style="left:22px;top:565px;font-size:8.4px;font-weight:400;color:#262836;transform:translate(0.02px,1.80px) scaleX(0.9646) skewX(0.05deg);">Person</span><span class="t" id="t76" style="left:303px;top:546px;font-size:7.9px;font-weight:700;color:#1c1e29;transform:translate(0.22px,1.00px) scaleX(0.9658) skewX(0.05deg);">Approver</span><span class="t" id="t77" style="left:310px;top:565px;font-size:8.4px;font-weight:400;color:#262836;transform:translate(0.50px,1.80px) scaleX(0.9539) skewX(0.05deg);">James Baker</span><span class="t" id="t78" style="left:591px;top:546px;font-size:7.9px;font-weight:700;color:#1c1e29;transform:translate(0.74px,1.00px) scaleX(1.0200) skewX(0.05deg);">Notification</span><span class="t" id="t79" style="left:599px;top:565px;font-size:8.4px;font-weight:400;color:#262836;transform:translate(0.34px,1.80px) scaleX(0.9913) skewX(0.05deg);">Off</span><span class="t" id="t80" style="left:33px;top:603px;font-size:8px;font-weight:700;color:#0f69ba;transform:translate(0.59px,1.65px) scaleX(0.9516) skewX(0.05deg);">Add Condition Set</span><span class="t" id="t81" style="left:133px;top:603px;font-size:8px;font-weight:700;color:#0f69ba;transform:translate(0.69px,1.65px) scaleX(0.9711) skewX(0.05deg);">Dublicate Condition Set</span><span class="t" id="t82" style="left:254px;top:603px;font-size:8px;font-weight:700;color:#d2330f;transform:translate(0.83px,1.65px) scaleX(0.9772) skewX(0.05deg);">Delete Condition Set</span></main>
<footer class="layer" id="footer-layer"><span class="t" id="t83" style="left:721px;top:648px;font-size:8.2px;font-weight:400;color:#a2a6ba;transform:translate(0.14px,1.00px) scaleX(0.9985) skewX(0.05deg);">Save</span><span class="t" id="t84" style="left:761px;top:648px;font-size:8.2px;font-weight:400;color:#9a9eb5;transform:translate(0.60px,1.00px) scaleX(0.9853) skewX(0.05deg);">Cancel</span><span class="t" id="t85" style="left:809px;top:648px;font-size:8px;font-weight:700;color:#d2330f;transform:translate(0.10px,1.00px) scaleX(0.9890) skewX(0.05deg);">Delete Worflow</span></footer>
</div></body></html>
